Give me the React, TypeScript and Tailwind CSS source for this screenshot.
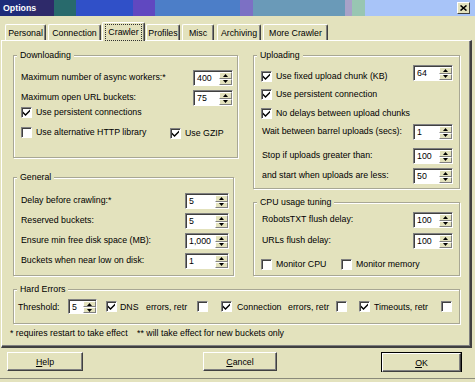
import React from 'react';

const Check: React.FC<{ checked?: boolean }> = ({ checked }) => (
  <span className="flex h-[11px] w-[11px] shrink-0 items-center justify-center border border-t-[#808080] border-l-[#808080] border-b-white border-r-white bg-white shadow-[inset_1px_1px_0_#404040]">
    {checked && (
      <svg width="7" height="7" viewBox="0 0 7 7" className="block">
        <path d="M0 2.5 L2.5 5 L7 0.5 L7 2.5 L2.5 7 L0 4.5 Z" fill="#000" />
      </svg>
    )}
  </span>
);

const CheckLabel: React.FC<{ label: string; checked?: boolean; className?: string }> = ({ label, checked, className = '' }) => (
  <div className={`flex h-[12px] items-center gap-[4px] ${className}`}>
    <Check checked={checked} />
    <span className="whitespace-nowrap leading-[12px]">{label}</span>
  </div>
);

const Arrow: React.FC<{ up?: boolean }> = ({ up }) => (
  <svg width="5" height="3" viewBox="0 0 5 3" className="block">
    <path d={up ? 'M2.5 0 L5 3 L0 3 Z' : 'M0 0 L5 0 L2.5 3 Z'} fill="#000" />
  </svg>
);

const SpinBtn: React.FC<{ up?: boolean }> = ({ up }) => (
  <div className="flex flex-1 items-center justify-center border border-t-white border-l-white border-r-[#808080] border-b-[#808080] bg-[#e3e2bd]">
    <Arrow up={up} />
  </div>
);

const Spin: React.FC<{ value: string; className?: string }> = ({ value, className = 'w-[40px] h-[16px]' }) => (
  <div className={`flex shrink-0 border border-t-[#808080] border-l-[#808080] border-b-white border-r-white bg-white shadow-[inset_1px_1px_0_#404040] ${className}`}>
    <span className="flex-1 pl-[3px] pt-[1px] leading-[12px]">{value}</span>
    <div className="flex w-[13px] flex-col pt-[1px]">
      <SpinBtn up />
      <SpinBtn />
    </div>
  </div>
);

const SpinRow: React.FC<{ label: string; value: string; spin?: string; className?: string; labelClass?: string }> = ({
  label,
  value,
  spin,
  className = '',
  labelClass = '',
}) => (
  <div className={`flex items-start justify-between ${className}`}>
    <span className={`whitespace-nowrap pt-[1px] leading-[12px] ${labelClass}`}>{label}</span>
    <Spin value={value} className={spin} />
  </div>
);

const Group: React.FC<{ title: string; className?: string; children: React.ReactNode }> = ({ title, className = '', children }) => (
  <div className={`relative shrink-0 border border-[#a8a794] shadow-[inset_1px_1px_0_#fff,1px_1px_0_#fff] ${className}`}>
    <span className="absolute left-[3px] top-[-7px] whitespace-nowrap bg-[#e3e2bd] px-[3px] leading-[12px]">{title}</span>
    {children}
  </div>
);

const Tab: React.FC<{ label: string; className?: string }> = ({ label, className = '' }) => (
  <div
    className={`flex h-[16px] shrink-0 items-center justify-center rounded-t-[2px] border-l border-t border-r border-l-white border-t-white border-r-[#404040] shadow-[inset_-1px_0_0_#808080] pt-[1px] leading-[12px] ${className}`}
  >
    {label}
  </div>
);

const Btn: React.FC<{ children: React.ReactNode; className?: string }> = ({ children, className = '' }) => (
  <div
    className={`flex h-[19px] shrink-0 items-center justify-center border border-t-white border-l-white border-r-[#404040] border-b-[#404040] shadow-[inset_-1px_-1px_0_#808080] leading-[12px] ${className}`}
  >
    {children}
  </div>
);

export default function App() {
  return (
    <div className="h-[382px] w-[475px] overflow-hidden bg-[#e3e2bd] font-['Liberation_Sans',Arial,sans-serif] text-[8.8px] text-black">
      {/* title bar */}
      <div className="flex h-[16px] items-center justify-between bg-[linear-gradient(to_right,#1e2c7a_0_29px,#2e2a6a_29px_54px,#286a6c_54px_76px,#3050c8_76px_133px,#6048c0_133px_155px,#4c7ec8_155px_240px,#7c70c4_240px_253px,#6a9ab8_253px_345px,#a8a2c8_345px_352px,#98c6b2_352px_365px,#a8c4f8_365px_100%)] pl-[3px] pr-[5px]">
        <span className="font-bold leading-[12px] text-white">Options</span>
        <div className="flex h-[12px] w-[13px] items-center justify-center border border-t-white border-l-white border-r-[#404040] border-b-[#404040] bg-[#e3e2bd]">
          <svg width="7" height="6" viewBox="0 0 7 6" className="block">
            <path d="M0.5 0.5 L6.5 5.5 M6.5 0.5 L0.5 5.5" stroke="#000" strokeWidth="1.6" />
          </svg>
        </div>
      </div>

      {/* tabs */}
      <div className="flex h-[24px] items-end">
        <Tab label="Personal" className="ml-[5px] w-[41px]" />
        <Tab label="Connection" className="ml-[2px] w-[53px]" />
        <div className="relative z-10 -mb-[1px] ml-[1px] flex h-[19px] w-[43px] shrink-0 items-start justify-center rounded-t-[2px] border-l border-t border-r border-l-white border-t-white border-r-[#404040] bg-[#e3e2bd] pt-[1px] shadow-[inset_-1px_0_0_#808080]">
          <span className="border border-dotted border-[#303030] px-[2px] pb-[2px] pt-[1px] leading-[12px]">Crawler</span>
        </div>
        <Tab label="Profiles" className="ml-[1px] w-[34px]" />
        <Tab label="Misc" className="ml-[2px] w-[32px]" />
        <Tab label="Archiving" className="ml-[3px] w-[44px]" />
        <Tab label="More Crawler" className="ml-[2px] w-[65px]" />
      </div>

      {/* tab page */}
      <div className="ml-[1px] h-[308px] w-[471px] border border-b-2 border-r-2 border-t-white border-l-white border-r-[#404040] border-b-[#404040] pl-[11px] pt-[14px] shadow-[inset_-1px_-1px_0_#808080]">
        <div className="flex">
          {/* left column */}
          <div className="flex w-[225px] flex-col">
            <Group title="Downloading" className="h-[103px] w-[225px] pl-[7px] pr-[4px] pt-[14px]">
              <SpinRow label="Maximum number of async workers:*" value="400" />
              <SpinRow label="Maximum open URL buckets:" value="75" className="mt-[4px]" />
              <CheckLabel label="Use persistent connections" checked />
              <div className="mt-[8px] flex items-start">
                <CheckLabel label="Use alternative HTTP library" className="w-[149px]" />
                <CheckLabel label="Use GZIP" checked className="mt-[1px]" />
              </div>
            </Group>

            <Group title="General" className="mt-[19px] h-[99px] w-[221px] pl-[7px] pr-[4px] pt-[15px]">
              <SpinRow label="Delay before crawling:*" value="5" spin="w-[44px] h-[16px]" />
              <SpinRow label="Reserved buckets:" value="5" spin="w-[44px] h-[16px]" className="mt-[4px]" />
              <SpinRow label="Ensure min free disk space (MB):" value="1,000" spin="w-[44px] h-[16px]" className="mt-[4px]" />
              <SpinRow label="Buckets when near low on disk:" value="1" spin="w-[44px] h-[16px]" className="mt-[4px]" />
            </Group>
          </div>

          {/* right column */}
          <div className="ml-[15px] flex w-[207px] flex-col">
            <Group title="Uploading" className="h-[134px] w-[207px] pl-[7px] pr-[6px] pt-[9px]">
              <div className="flex items-start justify-between">
                <CheckLabel label="Use fixed upload chunk (KB)" checked className="mt-[5px]" />
                <Spin value="64" />
              </div>
              <CheckLabel label="Use persistent connection" checked className="mt-[6px]" />
              <CheckLabel label="No delays between upload chunks" checked className="mt-[7px]" />
              <SpinRow label="Wait between barrel uploads (secs):" value="1" className="mt-[5px]" labelClass="ml-[1px]" />
              <SpinRow label="Stop if uploads greater than:" value="100" className="mt-[8px]" labelClass="ml-[1px]" />
              <SpinRow label="and start when uploads are less:" value="50" className="mt-[4px]" labelClass="ml-[1px]" />
            </Group>

            <Group title="CPU usage tuning" className="mt-[13px] h-[74px] w-[207px] pl-[7px] pr-[6px] pt-[9px]">
              <SpinRow label="RobotsTXT flush delay:" value="100" labelClass="ml-[1px]" />
              <SpinRow label="URLs flush delay:" value="100" className="mt-[5px]" labelClass="ml-[1px]" />
              <div className="mt-[9px] flex">
                <CheckLabel label="Monitor CPU" className="w-[80px]" />
                <CheckLabel label="Monitor memory" />
              </div>
            </Group>
          </div>
        </div>

        <Group title="Hard Errors" className="mt-[13px] h-[35px] w-[447px] pl-[4px] pt-[9px]">
          <div className="flex h-[15px] items-center">
            <span className="w-[50px] shrink-0 leading-[12px]">Threshold:</span>
            <Spin value="5" className="w-[29px] h-[15px]" />
            <span className="ml-[9px]">
              <Check checked />
            </span>
            <span className="ml-[3px] w-[26px] shrink-0 leading-[12px]">DNS</span>
            <span className="w-[51px] shrink-0 whitespace-nowrap leading-[12px]">errors, retr</span>
            <Check />
            <span className="ml-[13px]">
              <Check checked />
            </span>
            <span className="ml-[5px] w-[51px] shrink-0 leading-[12px]">Connection</span>
            <span className="w-[48px] shrink-0 whitespace-nowrap leading-[12px]">errors, retr</span>
            <Check />
            <span className="ml-[12px]">
              <Check checked />
            </span>
            <span className="ml-[4px] w-[67px] shrink-0 whitespace-nowrap leading-[12px]">Timeouts, retr</span>
            <Check />
          </div>
        </Group>

        <div className="-ml-[3px] mt-[3px] flex leading-[12px]">
          <span className="w-[127px] shrink-0 whitespace-nowrap">* requires restart to take effect</span>
          <span className="whitespace-nowrap">** will take effect for new buckets only</span>
        </div>
      </div>

      {/* buttons */}
      <div className="mt-[4px] flex items-start">
        <Btn className="ml-[7px] w-[76px]">
          <span>
            <span className="underline">H</span>elp
          </span>
        </Btn>
        <Btn className="ml-[120px] w-[74px]">
          <span>
            <span className="underline">C</span>ancel
          </span>
        </Btn>
        <div className="ml-[104px] flex h-[20px] w-[81px] border border-black">
          <Btn className="h-[18px] w-full">
            <span>
              <span className="underline">O</span>K
            </span>
          </Btn>
        </div>
      </div>
      <div className="mt-[6px] h-[1px] w-full bg-[#8a8a7a]" />
    </div>
  );
}
